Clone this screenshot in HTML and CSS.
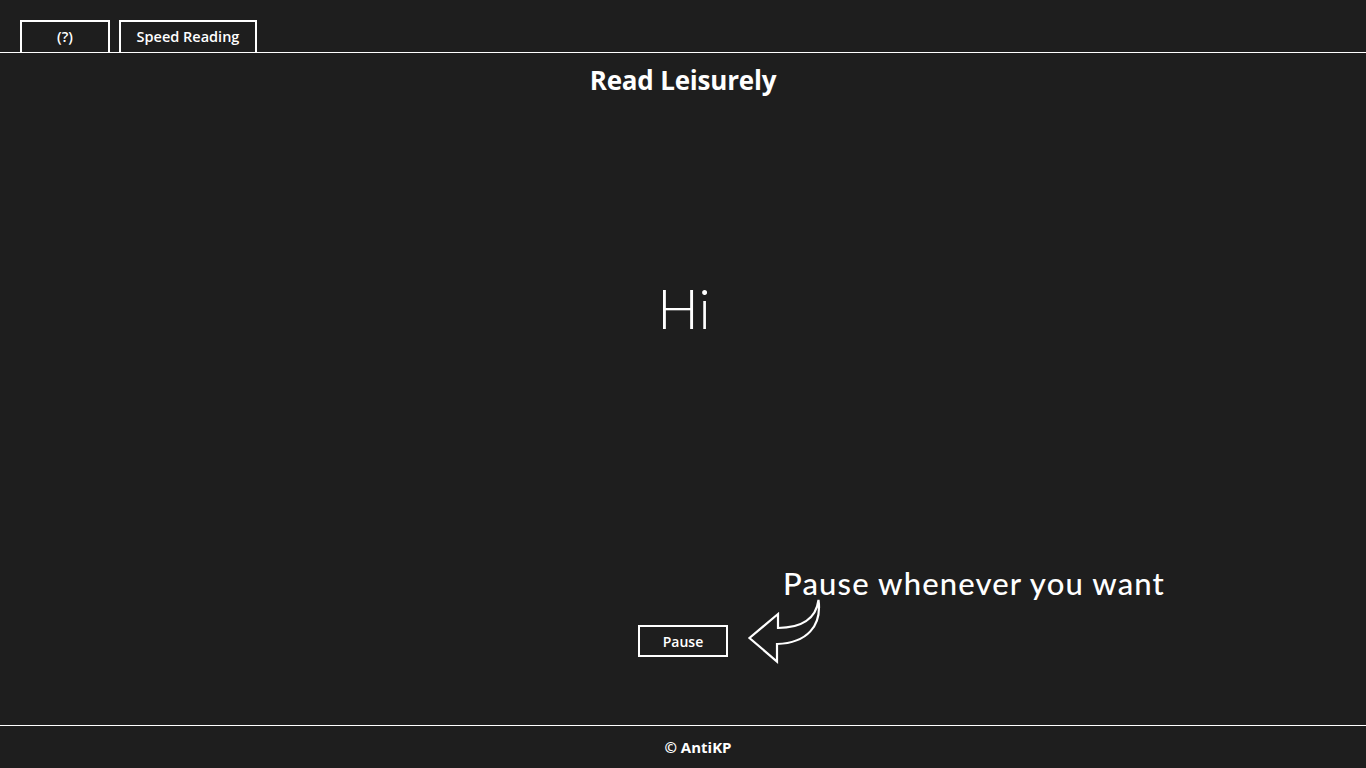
FILE: index.html
```html
<!DOCTYPE html>
<html lang="en">
<head>
<meta charset="utf-8">
<title>Read Leisurely</title>
<link rel="stylesheet" href="styles.css">
</head>
<body>
<div class="app">
  <header class="topbar">
    <button class="tab tab-help">(?)</button>
    <button class="tab tab-speed">Speed Reading</button>
  </header>
  <main class="stage">
    <h1 class="title">Read Leisurely</h1>
    <div class="word">Hi</div>
    <div class="controls">
      <button class="pause">Pause</button>
      <div class="hint">
        <svg class="hint-arrow" width="84" height="70" viewBox="740 596 84 70">
          <path d="M818.5,600 C816,619 801,628 778,628 L778,614 L749.5,638 L777,661.5 L777,644 C807,643 822,626 818.5,600 Z" fill="none" stroke="#fff" stroke-width="2.2" stroke-linejoin="miter"/>
        </svg>
        <span class="hint-text">Pause whenever you want</span>
      </div>
    </div>
  </main>
  <footer class="footer"><span class="credit">© AntiKP</span></footer>
</div>
</body>
</html>
```
FILE: styles.css
```css
html, body {
  margin: 0;
  padding: 0;
  background: #1e1e1e;
  color: #fff;
  font-family: "Open Sans", "Noto Sans", "Liberation Sans", sans-serif;
}

.app {
  height: 768px;
  display: flex;
  flex-direction: column;
}

.topbar {
  height: 53px;
  box-sizing: border-box;
  padding: 20px 0 0 20px;
  border-bottom: 1px solid #fff;
  display: flex;
  gap: 9px;
  align-items: flex-end;
  flex: none;
}

.tab {
  height: 32px;
  box-sizing: border-box;
  background: transparent;
  color: #fff;
  border: 2px solid #fff;
  border-bottom: none;
  font-family: "Open Sans", sans-serif;
  font-weight: 600;
  font-size: 14.5px;
  padding: 0;
  margin: 0;
  line-height: 30px;
}

.tab-help { width: 90px; }
.tab-speed { width: 138px; }

.stage {
  flex: 1;
  display: flex;
  flex-direction: column;
  align-items: center;
  border-bottom: 1px solid #fff;
}

.title {
  margin: 9px 0 0;
  font-size: 26px;
  font-weight: 700;
  line-height: 36px;
  letter-spacing: -0.2px;
}

.word {
  margin-top: 178px;
  font-family: Lato, "Open Sans", sans-serif;
  font-weight: 300;
  font-size: 55px;
  line-height: 64px;
  padding-left: 2px;
}

.controls {
  margin-top: auto;
  margin-bottom: 68px;
  position: relative;
}

.pause {
  width: 90px;
  height: 32px;
  box-sizing: border-box;
  background: transparent;
  color: #fff;
  border: 2px solid #fff;
  font-family: "Open Sans", sans-serif;
  font-weight: 600;
  font-size: 14px;
  padding: 0;
  display: block;
}

.hint {
  position: absolute;
  left: 102px;
  top: -58px;
  width: 450px;
  height: 100px;
}

.hint-arrow {
  position: absolute;
  left: 0;
  top: 29px;
}

.hint-text {
  position: absolute;
  left: 43px;
  top: -4px;
  font-family: Lato, "Open Sans", sans-serif;
  font-weight: 500;
  font-size: 31px;
  line-height: 40px;
  letter-spacing: 1.15px;
  white-space: nowrap;
}

.footer {
  height: 42px;
  display: flex;
  align-items: center;
  justify-content: center;
  flex: none;
}

.credit {
  font-weight: 700;
  font-size: 15px;
  margin-left: 30px;
}
```
